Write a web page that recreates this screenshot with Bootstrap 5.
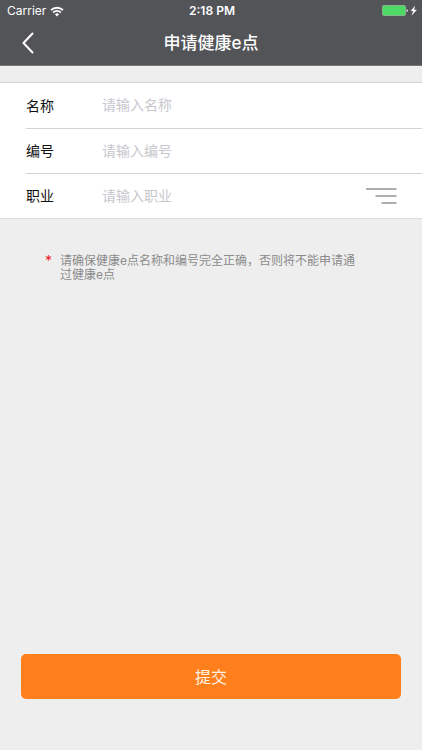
<!DOCTYPE html>
<html lang="zh-CN">
<head>
<meta charset="utf-8">
<meta name="viewport" content="width=device-width, initial-scale=1">
<title>申请健康e点</title>
<link href="https://cdn.jsdelivr.net/npm/bootstrap@5.3.0/dist/css/bootstrap.min.css" rel="stylesheet">
<style>
body { background: #eeeeee; font-family: Inter, "Noto Sans CJK SC", sans-serif; font-size: 14px; }
.app-header { background: #535458; border-bottom: 1px solid #77777a; }
.status-bar { height: 22px; font-size: 12px; line-height: 22px; padding: 0 5px 0 7px; }
.title-bar { height: 43px; padding-bottom: 2px; }
.title-bar h1 { font-size: 17px; line-height: 24px; font-weight: 500; }
.back-btn { width: 56px; }
.side { flex: 1 1 0; }
.form-rows { margin-top: 16px; background: #fff; border-top: 1px solid #d3d3d5; border-bottom: 1px solid #dcdcdd; }
.form-line { margin-left: 26px; height: 45px; padding-bottom: 1px; }
.form-line + .form-line { border-top: 1px solid #d3d3d5; }
.form-line label { width: 76px; color: #111; }
.form-line input { min-width: 0; font-size: 14px; line-height: 20px; }
.form-line input::placeholder { color: #c7c7cd; opacity: 1; }
.menu-btn { margin-right: 25px; }
.note { margin: 35px 56px 0 45px; font-size: 12px; line-height: 14px; color: #8b8b8b; }
.note-star { width: 15px; color: #f0201c; font-size: 14px; }
.submit-area { padding: 0 21px 51px; }
.submit-btn, .submit-btn:hover { height: 45px; background: #ff7f1c; color: #fff3e4; font-size: 16px; border-radius: 5px; }
</style>
</head>
<body class="min-vh-100 d-flex flex-column">
<header class="app-header text-white">
  <div class="status-bar d-flex align-items-center">
    <div class="side d-flex align-items-center">
      <span>Carrier</span>
      <svg class="ms-1" width="14" height="11" viewBox="0 0 14 11" aria-hidden="true">
        <g fill="none" stroke="#fff" stroke-width="1.8"><path d="M1 4.2a8.6 8.6 0 0 1 12 0"/><path d="M3.2 6.5a5.4 5.4 0 0 1 7.6 0"/></g>
        <path d="M4.9 8.3a3 3 0 0 1 4.2 0L7 10.500z" fill="#fff"/>
      </svg>
    </div>
    <span class="fw-semibold">2:18 PM</span>
    <div class="side d-flex align-items-center justify-content-end">
      <svg width="35" height="12" viewBox="0 0 35 12" aria-hidden="true">
        <rect x=".5" y=".5" width="23" height="10" rx="1.500" fill="#4cd964" stroke="#85b58d"/>
        <path d="M24.500 4q1.500 0 1.500 1.500T24.500 7z" fill="#d8d8da"/>
        <path d="M33 .8 28.600 6h2.600l-1.700 4.800L34.900 4.800h-2.700z" fill="#fff"/>
      </svg>
    </div>
  </div>
  <div class="title-bar d-flex align-items-center">
    <div class="side">
      <button type="button" class="back-btn btn p-0 border-0 d-flex justify-content-center" aria-label="返回">
        <svg width="12" height="22" viewBox="0 0 12 22" aria-hidden="true"><path d="M10.500 1.500 1.500 11l9 9.500" fill="none" stroke="#fff" stroke-width="2" stroke-linecap="round" stroke-linejoin="round"/></svg>
      </button>
    </div>
    <h1 class="m-0">申请健康e点</h1>
    <div class="side"></div>
  </div>
</header>
<form class="flex-grow-1 d-flex flex-column">
  <div class="form-rows">
    <div class="form-line d-flex align-items-center">
      <label for="name">名称</label>
      <input id="name" type="text" class="flex-grow-1 border-0 p-0 bg-transparent" placeholder="请输入名称">
    </div>
    <div class="form-line d-flex align-items-center">
      <label for="code">编号</label>
      <input id="code" type="text" class="flex-grow-1 border-0 p-0 bg-transparent" placeholder="请输入编号">
    </div>
    <div class="form-line d-flex align-items-center">
      <label for="job">职业</label>
      <input id="job" type="text" class="flex-grow-1 border-0 p-0 bg-transparent" placeholder="请输入职业">
      <button type="button" class="menu-btn btn p-0 border-0 d-flex" aria-label="选择职业">
        <svg width="31" height="16" viewBox="0 0 31 16" aria-hidden="true"><path d="M0 1h30.500M9.500 8h21M15.500 15h15" fill="none" stroke="#949496" stroke-width="1.300"/></svg>
      </button>
    </div>
  </div>
  <div class="note d-flex">
    <span class="note-star flex-shrink-0">*</span>
    <p class="m-0">请确保健康e点名称和编号完全正确，否则将不能申请通过健康e点</p>
  </div>
  <div class="submit-area mt-auto">
    <button type="submit" class="submit-btn btn w-100 border-0 p-0">提交</button>
  </div>
</form>
<script src="https://cdn.jsdelivr.net/npm/bootstrap@5.3.0/dist/js/bootstrap.bundle.min.js"></script>
</body>
</html>
